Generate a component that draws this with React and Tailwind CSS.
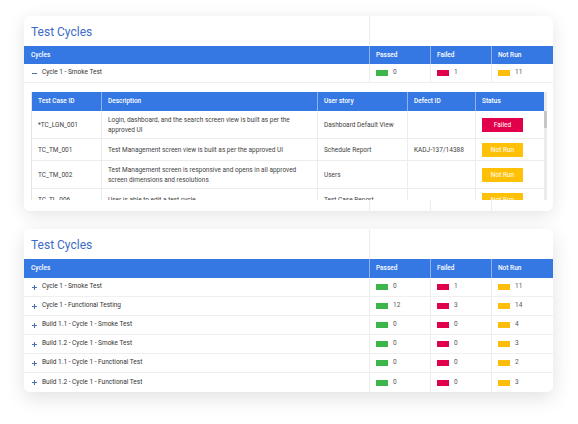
import React from "react";

const cols = "grid grid-cols-[345px_61px_61px_62px]";
const innerCols = "grid grid-cols-[69px_216px_90px_68px_70px]";

function Legend({ color, value }) {
  return (
    <div className="flex items-center gap-[5px] pl-[6px] border-l border-[#ececec] h-full">
      <span className={`block w-[12px] h-[6px] ${color}`}></span>
      <span className="text-[#555]">{value}</span>
    </div>
  );
}

function Header() {
  return (
    <div className={`${cols} h-[19px] bg-[#3678e3] text-white font-medium items-stretch`}>
      <div className="flex items-center pl-[7px]">Cycles</div>
      <div className="flex items-center pl-[6px] border-l border-[#8fb2f0]">Passed</div>
      <div className="flex items-center pl-[6px] border-l border-[#8fb2f0]">Failed</div>
      <div className="flex items-center pl-[6px] border-l border-[#8fb2f0]">Not Run</div>
    </div>
  );
}

function Title() {
  return (
    <div className={`${cols} h-[30px]`}>
      <div className="flex items-center pl-[7px] pt-[1px] text-[12px] text-[#3b6cc6]">Test Cycles</div>
      <div className="border-l border-[#ececec]"></div>
      <div></div>
      <div></div>
    </div>
  );
}

function Plus() {
  return (
    <span className="relative block w-[5px] h-[5px]">
      <span className="absolute left-0 top-[2px] w-[5px] h-[1px] bg-[#4a6fb3]"></span>
      <span className="absolute left-[2px] top-0 w-[1px] h-[5px] bg-[#4a6fb3]"></span>
    </span>
  );
}

function CycleRow({ name, p, f, n, last }) {
  return (
    <div className={`${cols} h-[19px] items-stretch ${last ? "" : "border-b border-[#efefef]"}`}>
      <div className="flex items-center pl-[8px] gap-[5px] text-[#333]">
        <Plus />
        <span>{name}</span>
      </div>
      <Legend color="bg-[#3cb54a]" value={p} />
      <Legend color="bg-[#e1004c]" value={f} />
      <Legend color="bg-[#fdbd0b]" value={n} />
    </div>
  );
}

function Badge({ kind }) {
  const c = kind === "Failed" ? "bg-[#e3004b]" : "bg-[#ffc107]";
  return (
    <div className={`w-[41px] h-[14px] ${c} text-white flex items-center justify-center`}>{kind}</div>
  );
}

const testRows = [
  { id: "*TC_LGN_001", desc: "Login, dashboard, and the search screen view is built as per the approved UI", story: "Dashboard Default View", defect: "", status: "Failed" },
  { id: "TC_TM_001", desc: "Test Management screen view is built as per the approved UI", story: "Schedule Report", defect: "KADJ-137/14388", status: "Not Run" },
  { id: "TC_TM_002", desc: "Test Management screen is responsive and opens in all approved screen dimensions and resolutions", story: "Users", defect: "", status: "Not Run" },
  { id: "TC_TL_006", desc: "User is able to edit a test cycle", story: "Test Case Report", defect: "", status: "Not Run" },
];

function InnerTable() {
  return (
    <div className="flex h-[108px] ml-[7px] mr-[5px] overflow-hidden">
      <div className="w-[513px] border-l border-[#e6e6e6] overflow-hidden">
        <div className={`${innerCols} h-[19px] bg-[#3678e3] text-white font-medium`}>
          <div className="flex items-center pl-[6px]">Test Case ID</div>
          <div className="flex items-center pl-[6px] border-l border-[#8fb2f0]">Description</div>
          <div className="flex items-center pl-[6px] border-l border-[#8fb2f0]">User story</div>
          <div className="flex items-center pl-[6px] border-l border-[#8fb2f0]">Defect ID</div>
          <div className="flex items-center pl-[6px] border-l border-[#8fb2f0]">Status</div>
        </div>
        {testRows.map((r, i) => (
          <div key={i} className={`${innerCols} border-b border-[#ececec] text-[#444] leading-[10px]`}>
            <div className="flex items-center pl-[6px] pt-[4px] pb-[3px]">{r.id}</div>
            <div className="flex items-center pl-[6px] pr-[4px] pt-[4px] pb-[3px] border-l border-[#ececec]">{r.desc}</div>
            <div className="flex items-center pl-[6px] pt-[4px] pb-[3px] border-l border-[#ececec]">{r.story}</div>
            <div className="flex items-center pl-[6px] pt-[4px] pb-[3px] border-l border-[#ececec]">{r.defect}</div>
            <div className="flex items-center pl-[6px] pt-[4px] pb-[3px] border-l border-[#ececec]">
              <Badge kind={r.status} />
            </div>
          </div>
        ))}
      </div>
      <div className="w-[3px] bg-[#ececec] flex flex-col">
        <div className="h-[19px]"></div>
        <div className="h-[17px] bg-[#c6c6c6]"></div>
      </div>
    </div>
  );
}

const cycles2 = [
  ["Cycle 1 - Smoke Test", 0, 1, 11],
  ["Cycle 1 - Functional Testing", 12, 3, 14],
  ["Build 1.1 - Cycle 1 - Smoke Test", 0, 0, 4],
  ["Build 1.2 - Cycle 1 - Smoke Test", 0, 0, 3],
  ["Build 1.1 - Cycle 1 - Functional Test", 0, 0, 2],
  ["Build 1.2 - Cycle 1 - Functional Test", 0, 0, 3],
];

export default function App() {
  return (
    <div className="w-[578px] h-[424px] bg-white overflow-hidden pt-[16px] pl-[24px] text-[6.5px] font-['Roboto',sans-serif]">
      <div className="w-[529px] flex flex-col gap-[18px]">
        <div className="bg-white rounded-[6px] shadow-[0_4px_18px_rgba(0,0,0,0.11)] overflow-hidden h-[195px]">
          <Title />
          <div className="h-[18px] overflow-hidden"><Header /></div>
          <div className={`${cols} h-[19px] items-stretch border-b border-[#efefef]`}>
            <div className="flex items-center pl-[8px] gap-[5px] text-[#333]">
              <span className="block w-[5px] h-[1px] bg-[#4a6fb3]"></span>
              <span>Cycle 1 - Smoke Test</span>
            </div>
            <Legend color="bg-[#3cb54a]" value={0} />
            <Legend color="bg-[#e1004c]" value={1} />
            <Legend color="bg-[#fdbd0b]" value={11} />
          </div>
          <div className="pt-[9px]">
            <InnerTable />
            <div className={`${cols} h-[11px]`}>
              <div></div>
              <div className="border-l border-[#ececec]"></div>
              <div className="border-l border-[#ececec]"></div>
              <div className="border-l border-[#ececec]"></div>
            </div>
          </div>
        </div>
        <div className="bg-white rounded-[6px] shadow-[0_6px_20px_rgba(0,0,0,0.12)] overflow-hidden">
          <Title />
          <Header />
          {cycles2.map((c, i) => (
            <CycleRow key={i} name={c[0]} p={c[1]} f={c[2]} n={c[3]} last={i === cycles2.length - 1} />
          ))}
        </div>
      </div>
    </div>
  );
}
